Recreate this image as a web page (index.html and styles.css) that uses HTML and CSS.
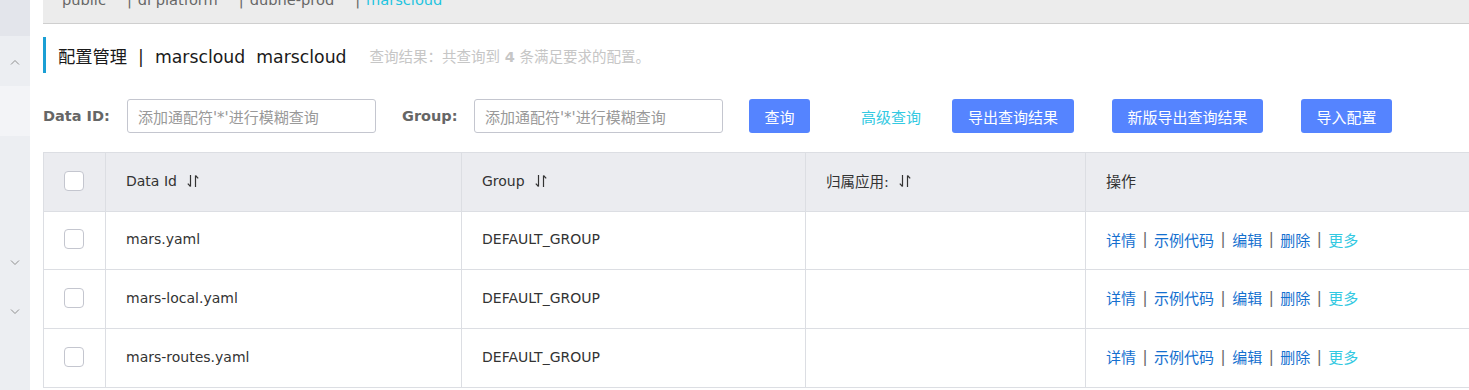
FILE: index.html
```html
<!DOCTYPE html>
<html lang="zh">
<head>
<meta charset="utf-8">
<title>配置管理</title>
<link rel="stylesheet" href="styles.css">
</head>
<body>
<aside class="sidebar">
  <div class="sb-top"></div>
  <div class="sb-sec sb-a">
    <svg class="chev" width="10" height="6" viewBox="0 0 10 6"><path d="M1 5.5 L5 1.5 L9 5.5" fill="none" stroke="#8f8f8f" stroke-width="1"/></svg>
  </div>
  <div class="sb-sec sb-b"></div>
  <div class="sb-rest">
    <svg class="chev chev-1" width="10" height="6" viewBox="0 0 10 6"><path d="M1 0.5 L5 4.5 L9 0.5" fill="none" stroke="#8f8f8f" stroke-width="1"/></svg>
    <svg class="chev chev-2" width="10" height="6" viewBox="0 0 10 6"><path d="M1 0.5 L5 4.5 L9 0.5" fill="none" stroke="#8f8f8f" stroke-width="1"/></svg>
  </div>
</aside>
<main class="main">
  <div class="ns-bar">
    <div class="ns-list">
      <span class="ns">public</span>
      <span class="ns-sep">|</span><span class="ns">di platform</span>
      <span class="ns-sep">|</span><span class="ns">dubhe-prod</span>
      <span class="ns-sep">|</span><span class="ns ns-active">marscloud</span>
    </div>
  </div>

  <div class="title-row">
    <h1 class="page-title">配置管理&nbsp;&nbsp;|&nbsp;&nbsp;marscloud&nbsp;&nbsp;marscloud</h1>
    <span class="result-tip">查询结果：共查询到 <b>4</b> 条满足要求的配置。</span>
  </div>

  <div class="search-row">
    <label class="lbl lbl-id">Data ID:</label>
    <div class="inp"><span class="ph">添加通配符'*'进行模糊查询</span></div>
    <label class="lbl lbl-group">Group:</label>
    <div class="inp"><span class="ph">添加通配符'*'进行模糊查询</span></div>
    <button class="btn btn-query">查询</button>
    <a class="adv-link">高级查询</a>
    <button class="btn btn-export">导出查询结果</button>
    <button class="btn btn-newexport">新版导出查询结果</button>
    <button class="btn btn-import">导入配置</button>
  </div>

  <div class="table">
    <div class="tr th">
      <div class="td c-check"><span class="cb"></span></div>
      <div class="td c-id">Data Id <svg class="sort" width="12" height="14" viewBox="0 0 12 14"><path d="M3.5 1 V12.5 M3.5 12.5 L0.8 9.6 M8.5 1.5 V13 M8.5 1.5 L11.2 4.4" fill="none" stroke="#333" stroke-width="1.2"/></svg></div>
      <div class="td c-group">Group <svg class="sort" width="12" height="14" viewBox="0 0 12 14"><path d="M3.5 1 V12.5 M3.5 12.5 L0.8 9.6 M8.5 1.5 V13 M8.5 1.5 L11.2 4.4" fill="none" stroke="#333" stroke-width="1.2"/></svg></div>
      <div class="td c-app"><span class="cjk">归属应用:</span> <svg class="sort" width="12" height="14" viewBox="0 0 12 14"><path d="M3.5 1 V12.5 M3.5 12.5 L0.8 9.6 M8.5 1.5 V13 M8.5 1.5 L11.2 4.4" fill="none" stroke="#333" stroke-width="1.2"/></svg></div>
      <div class="td c-op"><span class="cjk-op">操作</span></div>
    </div>
    <div class="tr tb tb-1">
      <div class="td c-check"><span class="cb"></span></div>
      <div class="td c-id">mars.yaml</div>
      <div class="td c-group">DEFAULT_GROUP</div>
      <div class="td c-app"></div>
      <div class="td c-op ops"><a class="op">详情</a><span class="op-sep">|</span><a class="op">示例代码</a><span class="op-sep">|</span><a class="op">编辑</a><span class="op-sep">|</span><a class="op">删除</a><span class="op-sep">|</span><a class="op op-more">更多</a></div>
    </div>
    <div class="tr tb">
      <div class="td c-check"><span class="cb"></span></div>
      <div class="td c-id">mars-local.yaml</div>
      <div class="td c-group">DEFAULT_GROUP</div>
      <div class="td c-app"></div>
      <div class="td c-op ops"><a class="op">详情</a><span class="op-sep">|</span><a class="op">示例代码</a><span class="op-sep">|</span><a class="op">编辑</a><span class="op-sep">|</span><a class="op">删除</a><span class="op-sep">|</span><a class="op op-more">更多</a></div>
    </div>
    <div class="tr tb">
      <div class="td c-check"><span class="cb"></span></div>
      <div class="td c-id">mars-routes.yaml</div>
      <div class="td c-group">DEFAULT_GROUP</div>
      <div class="td c-app"></div>
      <div class="td c-op ops"><a class="op">详情</a><span class="op-sep">|</span><a class="op">示例代码</a><span class="op-sep">|</span><a class="op">编辑</a><span class="op-sep">|</span><a class="op">删除</a><span class="op-sep">|</span><a class="op op-more">更多</a></div>
    </div>
  </div>
</main>
</body>
</html>
```

FILE: styles.css
```css
* { box-sizing: border-box; }
html, body { margin: 0; padding: 0; height: 100%; overflow: hidden; }
body {
  display: flex;
  background: #fff;
  font-family: "DejaVu Sans", "Noto Sans CJK SC", sans-serif;
  color: #333;
  font-size: 14px;
}

/* sidebar */
.sidebar {
  width: 30px;
  flex: none;
  display: flex;
  flex-direction: column;
  background: #eceef2;
}
.sb-top { height: 36px; background: #e3e5eb; }
.sb-sec { height: 50px; display: flex; justify-content: center; align-items: center; }
.sb-a { background: #eceef2; }
.sb-b { background: #f3f4f7; }
.sb-rest { flex: 1; background: #eceef2; display: flex; flex-direction: column; align-items: center; }
.chev { display: block; }
.sb-a .chev { margin-top: 2px; }
.chev-1 { margin-top: 124px; }
.chev-2 { margin-top: 43px; }

/* main */
.main { flex: 1; margin-left: 13px; min-width: 0; }

.ns-bar {
  height: 24px;
  background: #ececec;
  border-bottom: 1px solid #cfcfcf;
  overflow: hidden;
}
.ns-list {
  display: flex;
  margin-top: -10px;
  padding-left: 19px;
  font-size: 14.6px;
  line-height: 20px;
  color: #666;
  white-space: nowrap;
}
.ns-sep { margin-left: 21px; margin-right: 6px; color: #666; }
.ns-active { color: #1ec4e0; }

.title-row {
  margin-top: 13px;
  height: 36px;
  border-left: 3px solid #1b9fd4;
  padding-left: 12px;
  display: flex;
  align-items: center;
}
.page-title {
  margin: 0;
  font-size: 17.3px;
  font-weight: normal;
  color: #1a1a1a;
  white-space: nowrap;
}
.result-tip {
  margin-left: 23px;
  font-size: 14.5px;
  color: #c6c6c6;
  white-space: nowrap;
}
.result-tip b { font-weight: bold; }

.search-row {
  margin-top: 26px;
  height: 34px;
  display: flex;
  align-items: center;
  white-space: nowrap;
}
.lbl { font-size: 14.5px; font-weight: bold; color: #666; }
.lbl-id { width: 84px; }
.lbl-group { margin-left: 26px; width: 72px; }
.inp {
  width: 249px;
  height: 34px;
  border: 1px solid #c4c6cf;
  border-radius: 3px;
  display: flex;
  align-items: center;
  padding-left: 10px;
}
.ph { font-size: 15px; color: #999; }
.btn {
  height: 34px;
  border: none;
  border-radius: 3px;
  background: #5584ff;
  color: #fff;
  font-family: inherit;
  font-size: 15px;
  padding: 0;
}
.btn-query { margin-left: 26px; width: 61px; }
.adv-link { margin-left: 51px; color: #33c9e2; font-size: 15px; }
.btn-export { margin-left: 31px; width: 122px; }
.btn-newexport { margin-left: 38px; width: 151px; }
.btn-import { margin-left: 38px; width: 91px; }

/* table */
.table {
  margin-top: 19px;
  border-top: 1px solid #dcdee3;
  border-left: 1px solid #dcdee3;
  width: 1500px;
}
.tr {
  display: flex;
  height: 59px;
  border-bottom: 1px solid #dcdee3;
}
.tb-1 { height: 58px; }
.th { background: #ebecf0; }
.td {
  display: flex;
  align-items: center;
  padding-left: 20px;
  padding-bottom: 3px;
  border-right: 1px solid #dcdee3;
  font-size: 14px;
  color: #333;
  white-space: nowrap;
}
.c-check { width: 62px; padding-left: 20px; }
.c-id { width: 356px; }
.c-group { width: 344px; }
.c-app { width: 280px; }
.c-op { flex: 1; border-right: none; }
.cjk { font-size: 14.5px; }
.cjk-op { font-size: 15px; }
.cb {
  width: 20px;
  height: 20px;
  border: 1px solid #c4c6cf;
  border-radius: 4px;
  background: #fff;
}
.sort { margin-left: 10px; }
.ops { font-size: 15px; }
.op { color: #1470cf; }
.op-more { color: #33c9e2; }
.op-sep { color: #666; margin: 0 6.5px; }
```
